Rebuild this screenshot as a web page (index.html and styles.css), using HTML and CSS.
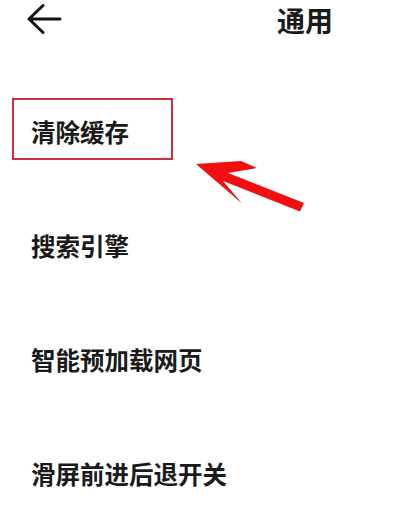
FILE: index.html
```html
<!DOCTYPE html>
<html lang="zh">
<head>
<meta charset="utf-8">
<link rel="stylesheet" href="styles.css">
</head>
<body>
<div class="page">
  <header class="topbar">
    <svg class="back" width="36" height="32" viewBox="0 0 36 32">
      <path d="M3 15 H34 M17 1.5 L3 15 L17 28.5" fill="none" stroke="#111" stroke-width="3" stroke-linecap="round" stroke-linejoin="round"/>
    </svg>
    <h1 class="title">通用</h1>
  </header>
  <ul class="list">
    <li class="item">清除缓存</li>
    <li class="item">搜索引擎</li>
    <li class="item">智能预加载网页</li>
    <li class="item">滑屏前进后退开关</li>
  </ul>
  <div class="mark-box"></div>
  <svg class="mark-arrow" width="400" height="518" viewBox="0 0 400 518">
    <polygon points="196,164 241,161 257,168 228,173 304,203 300,211.5 223,181 242,203.5" fill="#f01010"/>
  </svg>
</div>
</body>
</html>
```

FILE: styles.css
```css
html, body {
  margin: 0;
  padding: 0;
  background: #ffffff;
}
.page {
  position: relative;
  width: 400px;
  height: 518px;
  overflow: hidden;
  font-family: "Noto Sans CJK SC", "Noto Sans", sans-serif;
  color: #1a1a1a;
}
.topbar {
  display: flex;
  align-items: center;
  height: 40px;
  padding-left: 26px;
  padding-right: 67px;
}
.back {
  display: block;
}
.title {
  margin: 0 0 0 auto;
  font-size: 28px;
  font-weight: 700;
  line-height: 40px;
}
.list {
  list-style: none;
  margin: 0;
  padding: 34px 0 0 0;
}
.item {
  display: flex;
  align-items: center;
  height: 114px;
  padding-left: 31px;
  font-size: 24.5px;
  font-weight: 700;
  letter-spacing: 0;
}
.mark-box {
  position: absolute;
  left: 12px;
  top: 98px;
  width: 157px;
  height: 58px;
  border: 2px solid #c8303c;
}
.mark-arrow {
  position: absolute;
  left: 0;
  top: 0;
  pointer-events: none;
}
```
